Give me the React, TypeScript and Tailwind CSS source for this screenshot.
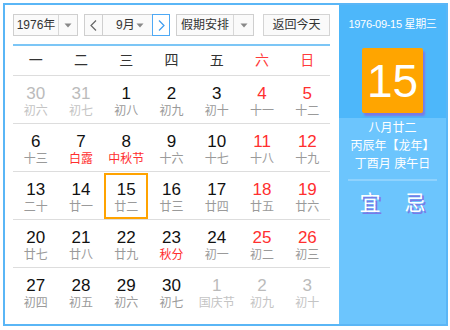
import React from "react";

type Day = { n: number; l: string; kind?: "other" | "weekend" | "normal"; fest?: boolean; sel?: boolean };

const weeks: Day[][] = [
  [
    { n: 30, l: "初六", kind: "other" },
    { n: 31, l: "初七", kind: "other" },
    { n: 1, l: "初八" },
    { n: 2, l: "初九" },
    { n: 3, l: "初十" },
    { n: 4, l: "十一", kind: "weekend" },
    { n: 5, l: "十二", kind: "weekend" },
  ],
  [
    { n: 6, l: "十三" },
    { n: 7, l: "白露", fest: true },
    { n: 8, l: "中秋节", fest: true },
    { n: 9, l: "十六" },
    { n: 10, l: "十七" },
    { n: 11, l: "十八", kind: "weekend" },
    { n: 12, l: "十九", kind: "weekend" },
  ],
  [
    { n: 13, l: "二十" },
    { n: 14, l: "廿一" },
    { n: 15, l: "廿二", sel: true },
    { n: 16, l: "廿三" },
    { n: 17, l: "廿四" },
    { n: 18, l: "廿五", kind: "weekend" },
    { n: 19, l: "廿六", kind: "weekend" },
  ],
  [
    { n: 20, l: "廿七" },
    { n: 21, l: "廿八" },
    { n: 22, l: "廿九" },
    { n: 23, l: "秋分", fest: true },
    { n: 24, l: "初一" },
    { n: 25, l: "初二", kind: "weekend" },
    { n: 26, l: "初三", kind: "weekend" },
  ],
  [
    { n: 27, l: "初四" },
    { n: 28, l: "初五" },
    { n: 29, l: "初六" },
    { n: 30, l: "初七" },
    { n: 1, l: "国庆节", kind: "other" },
    { n: 2, l: "初九", kind: "other" },
    { n: 3, l: "初十", kind: "other" },
  ],
];

const Caret = () => (
  <svg width="8" height="5" viewBox="0 0 8 5">
    <path d="M0.5 0.5 L7.5 0.5 L4 4.5 Z" fill="#888" />
  </svg>
);

const Chevron = ({ dir, color }: { dir: "l" | "r"; color: string }) => (
  <svg width="7" height="11" viewBox="0 0 7 11">
    <path
      d={dir === "l" ? "M6 0.5 L1 5.5 L6 10.5" : "M1 0.5 L6 5.5 L1 10.5"}
      fill="none"
      stroke={color}
      strokeWidth="1.2"
    />
  </svg>
);

const DayCell = ({ d }: { d: Day }) => {
  const numColor =
    d.kind === "other" ? "text-[#bbbbbb]" : d.kind === "weekend" ? "text-[#ff2f2f]" : "text-[#111111]";
  const lunarColor =
    d.kind === "other" ? "text-[#c4c4c4]" : d.fest ? "text-[#ff2f2f]" : "text-[#9a9a9a]";
  if (d.sel) {
    return (
      <div className="flex justify-center">
        <div className="w-[44px] h-[46px] mt-[1px] border-2 border-[#ffa300] flex flex-col items-center pt-[6px]">
          <div className={`text-[17px] leading-[18px] ${numColor}`}>{d.n}</div>
          <div className={`text-[12px] leading-[16px] ${lunarColor}`}>{d.l}</div>
        </div>
      </div>
    );
  }
  return (
    <div className="flex flex-col items-center pt-[9px]">
      <div className={`text-[17px] leading-[18px] ${numColor}`}>{d.n}</div>
      <div className={`text-[12px] leading-[16px] ${lunarColor}`}>{d.l}</div>
    </div>
  );
};

export default function App() {
  return (
    <div
      className="w-[450px] h-[330px] bg-white pt-[3px] pl-[3px]"
      style={{ fontFamily: '"Liberation Sans", Arial, "Noto Sans CJK SC", sans-serif' }}
    >
      <div className="w-[445px] h-[323px] border-2 border-[#5ab6f6] flex bg-white">
        {/* left: calendar */}
        <div className="w-[334px] pl-[8px] pr-[4px] pt-[9px]">
          <div className="flex items-center h-[22px] w-[317px] text-[12px] text-[#333]">
            <div className="flex h-[22px] w-[65px] border border-[#cfcfcf] bg-[#fafafa]">
              <div className="w-[45px] flex items-center justify-center border-r border-[#d8d8d8]">1976年</div>
              <div className="flex-1 flex items-center justify-center">
                <Caret />
              </div>
            </div>
            <div className="flex h-[22px] w-[86px] ml-[6px] bg-[#fafafa]">
              <div className="w-[19px] border border-[#cfcfcf] flex items-center justify-center">
                <Chevron dir="l" color="#666" />
              </div>
              <div className="w-[49px] border-y border-[#cfcfcf] flex items-center">
                <span className="ml-[13px]">9月</span>
                <span className="ml-auto mr-[8px] flex">
                  <Caret />
                </span>
              </div>
              <div className="w-[18px] border border-[#4ea9f5] bg-white flex items-center justify-center">
                <Chevron dir="r" color="#3d9cf0" />
              </div>
            </div>
            <div className="flex h-[22px] w-[78px] ml-[6px] border border-[#cfcfcf] bg-[#fafafa]">
              <div className="w-[57px] flex items-center justify-center border-r border-[#d8d8d8]">假期安排</div>
              <div className="flex-1 flex items-center justify-center">
                <Caret />
              </div>
            </div>
            <div className="ml-auto w-[67px] h-[22px] border border-[#d4d4d4] bg-[#fafafa] flex items-center justify-center">
              返回今天
            </div>
          </div>
          <div className="w-[317px] mt-[8px] border-b-2 border-[#7cc6f6]" />
          <div className="w-[317px] grid grid-cols-7 h-[30px] items-center border-b border-[#dddddd] text-[14px]">
            {["一", "二", "三", "四", "五", "六", "日"].map((w, i) => (
              <div key={w} className={`text-center ${i >= 5 ? "text-[#ff3b3b]" : "text-[#333]"}`}>
                {w}
              </div>
            ))}
          </div>
          {weeks.map((row, r) => (
            <div
              key={r}
              className={`w-[317px] grid grid-cols-7 h-[48px] ${r < 4 ? "border-b border-[#dddddd]" : ""}`}
            >
              {row.map((d, i) => (
                <DayCell key={i} d={d} />
              ))}
            </div>
          ))}
        </div>
        {/* right: info panel */}
        <div className="flex-1 flex flex-col bg-[#6cc5fd] text-white">
          <div className="h-[113px] bg-[#4db7fa] flex flex-col items-center">
            <div className="mt-[12px] text-[11px] leading-[14px] tracking-[-0.3px] whitespace-nowrap">1976-09-15 星期三</div>
            <div className="mt-[17px] w-[61px] h-[65px] bg-[#ffa500] rounded-[2px] flex items-center justify-center text-[46px] leading-none shadow-[2px_3px_2px_#7a7ae6]">
              15
            </div>
          </div>
          <div className="flex flex-col items-center text-[12px] leading-[18px] mt-[1px]">
            <div>八月廿二</div>
            <div>丙辰年【龙年】</div>
            <div>丁酉月 庚午日</div>
          </div>
          <div className="mx-[9px] mt-[6px] border-t-2 border-[#8fd2fd]" />
          <div className="flex justify-center gap-[24px] mt-[9px] text-[21px] leading-[26px] [text-shadow:2px_2px_0_#7a7ae6]">
            <span>宜</span>
            <span>忌</span>
          </div>
        </div>
      </div>
    </div>
  );
}
